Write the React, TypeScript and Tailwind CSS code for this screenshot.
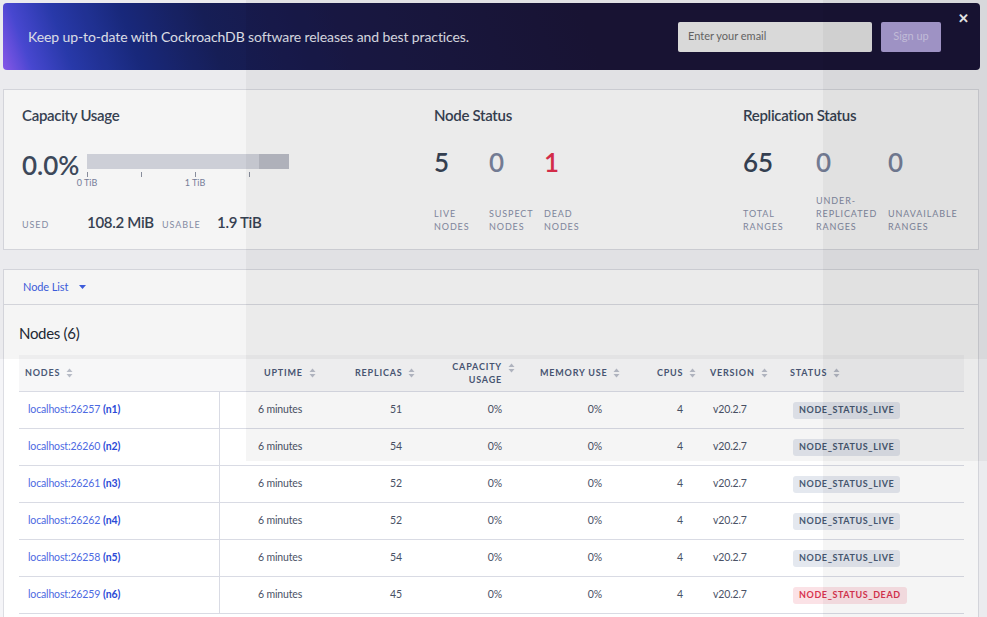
import React from 'react';

const font = { fontFamily: 'Lato, "Noto Sans", sans-serif' };

type NodeRow = {
  addr: string;
  id: string;
  replicas: number;
  dead?: boolean;
};

const rows: NodeRow[] = [
  { addr: 'localhost:26257', id: 'n1', replicas: 51 },
  { addr: 'localhost:26260', id: 'n2', replicas: 54 },
  { addr: 'localhost:26261', id: 'n3', replicas: 52 },
  { addr: 'localhost:26262', id: 'n4', replicas: 52 },
  { addr: 'localhost:26258', id: 'n5', replicas: 54 },
  { addr: 'localhost:26259', id: 'n6', replicas: 45, dead: true },
];

const SortIcon = () => (
  <svg width="7" height="10" viewBox="0 0 7 10" className="ml-[6px] shrink-0">
    <path d="M3.5 0.5 L6.5 4 L0.5 4 Z" fill="#b7bbc6" />
    <path d="M3.5 9.5 L6.5 6 L0.5 6 Z" fill="#b7bbc6" />
  </svg>
);

// statistique avec libellé en bas
const Stat = ({
  value,
  label,
  color,
  width,
}: {
  value: string;
  label: string[];
  color: string;
  width: string;
}) => (
  <div className={`flex flex-col h-full ${width}`}>
    <div className={`text-[26px] leading-[32px] font-semibold ${color}`}>{value}</div>
    <div className="mt-auto text-[9px] leading-[13px] tracking-[0.9px] text-[#8a91aa]">
      {label.map((l) => (
        <div key={l}>{l}</div>
      ))}
    </div>
  </div>
);

export default function App() {
  return (
    <div className="relative w-[987px] h-[617px] overflow-hidden bg-[#f5f5f8]" style={font}>
      {/* bandeau newsletter */}
      <div className="mx-[3px] mt-[3px] h-[67px] w-[977px] rounded-[4px] flex items-center pl-[25px] pr-[11px] bg-[linear-gradient(70deg,#8d5cf2_0%,#4a4ad8_3%,#2a3cb0_7%,#1a2a80_14%,#17205a_22%,#1b1a48_35%,#1b1539_60%,#1b1539_100%)]">
        <span className="text-[14px] tracking-[-0.1px] text-[#e4e6f0]">
          Keep up-to-date with CockroachDB software releases and best practices.
        </span>
        <div className="ml-auto w-[194px] h-[30px] rounded-[2px] bg-[#ececec] flex items-center pl-[10px] text-[11px] text-[#6b6b6b]">
          Enter your email
        </div>
        <div className="ml-[9px] w-[60px] h-[30px] rounded-[2px] bg-[#b3a6de] flex items-center justify-center text-[11px] text-[#dcd4f4]">
          Sign up
        </div>
        <div className="self-start mt-[9px] ml-[17px] text-white text-[13px] font-bold leading-none">
          ✕
        </div>
      </div>

      {/* récapitulatif du cluster */}
      <div className="mx-[3px] mt-[19px] w-[976px] h-[161px] border border-[#dcdde3] bg-white flex pl-[18px]">
        <div className="w-[412px] flex flex-col pt-[15px] pb-[16px]">
          <div className="text-[15px] leading-[20px] font-semibold tracking-[-0.3px] text-[#394455]">
            Capacity Usage
          </div>
          <div className="flex mt-[29px]">
            <div className="w-[65px] text-[26px] leading-[22px] font-semibold text-[#404b5e]">0.0%</div>
            <div className="flex flex-col">
              <div className="flex w-[202px] h-[15px]">
                <div className="w-[172px] bg-[#d6d8e0]" />
                <div className="w-[30px] bg-[#bfc1ca]" />
              </div>
              <div className="flex mt-[3px]">
                <div className="w-[54px] h-[5px] border-l border-[#8e93a3]" />
                <div className="w-[54px] h-[5px] border-l border-[#8e93a3]" />
                <div className="w-[54px] h-[5px] border-l border-[#8e93a3]" />
                <div className="w-[54px] h-[5px] border-l border-[#8e93a3]" />
              </div>
              <div className="flex text-[9px] leading-[11px] text-[#7b83a0]">
                <div className="w-[108px]">
                  <span className="inline-block -translate-x-1/2">0 TiB</span>
                </div>
                <div className="w-[108px]">
                  <span className="inline-block -translate-x-1/2">1 TiB</span>
                </div>
              </div>
            </div>
          </div>
          <div className="mt-auto flex items-baseline">
            <span className="w-[65px] text-[9px] tracking-[0.9px] text-[#8a91aa]">USED</span>
            <span className="w-[75px] text-[15px] font-semibold tracking-[-0.3px] text-[#394455]">108.2 MiB</span>
            <span className="w-[55px] text-[9px] tracking-[0.9px] text-[#8a91aa]">USABLE</span>
            <span className="text-[15px] font-semibold tracking-[-0.3px] text-[#394455]">1.9 TiB</span>
          </div>
        </div>

        <div className="w-[309px] flex flex-col pt-[15px] pb-[16px]">
          <div className="text-[15px] leading-[20px] font-semibold tracking-[-0.3px] text-[#394455]">
            Node Status
          </div>
          <div className="flex flex-1 mt-[21px]">
            <Stat value="5" label={['LIVE', 'NODES']} color="text-[#3a4558]" width="w-[55px]" />
            <Stat value="0" label={['SUSPECT', 'NODES']} color="text-[#7d87a1]" width="w-[55px]" />
            <Stat value="1" label={['DEAD', 'NODES']} color="text-[#e5304f]" width="w-[55px]" />
          </div>
        </div>

        <div className="flex-1 flex flex-col pt-[15px] pb-[16px]">
          <div className="text-[15px] leading-[20px] font-semibold tracking-[-0.3px] text-[#394455]">
            Replication Status
          </div>
          <div className="flex flex-1 mt-[21px]">
            <Stat value="65" label={['TOTAL', 'RANGES']} color="text-[#3a4558]" width="w-[73px]" />
            <Stat
              value="0"
              label={['UNDER-', 'REPLICATED', 'RANGES']}
              color="text-[#7d87a1]"
              width="w-[72px]"
            />
            <Stat value="0" label={['UNAVAILABLE', 'RANGES']} color="text-[#7d87a1]" width="w-[80px]" />
          </div>
        </div>
      </div>

      {/* liste des noeuds */}
      <div className="mx-[3px] mt-[19px] w-[976px] h-[400px] border border-[#dcdde3] bg-white">
        <div className="h-[35px] border-b border-[#dcdde3] flex items-center pl-[19px] text-[11px] tracking-[-0.1px] text-[#3f5fe3]">
          Node List
          <svg width="7" height="4" viewBox="0 0 7 4" className="ml-[11px]">
            <path d="M0 0 L7 0 L3.5 4 Z" fill="#3f5fe3" />
          </svg>
        </div>
        <div className="pl-[15px]">
          <div className="mt-[18px] text-[15px] leading-[20px] tracking-[-0.3px] text-[#242a35]">Nodes (6)</div>
          <div className="mt-[12px] w-[945px]">
            <div className="flex h-[37px] bg-[#f7f7f8] border-b border-[#d9dbe4] text-[9px] font-bold tracking-[0.8px] text-[#4a5876] whitespace-nowrap">
              <div className="w-[201px] pl-[6px] flex items-center">
                NODES
                <SortIcon />
              </div>
              <div className="w-[110px] pl-[44px] flex items-center">
                UPTIME
                <SortIcon />
              </div>
              <div className="w-[90px] pl-[25px] flex items-center">
                REPLICAS
                <SortIcon />
              </div>
              <div className="w-[100px] pr-[5px] flex items-center justify-end">
                <div className="text-right leading-[13px]">
                  CAPACITY
                  <br />
                  USAGE
                </div>
                <div className="self-start mt-[8px]">
                  <SortIcon />
                </div>
              </div>
              <div className="w-[105px] pl-[20px] flex items-center">
                MEMORY USE
                <SortIcon />
              </div>
              <div className="w-[75px] pl-[32px] flex items-center">
                CPUS
                <SortIcon />
              </div>
              <div className="w-[80px] pl-[10px] flex items-center">
                VERSION
                <SortIcon />
              </div>
              <div className="flex-1 pl-[10px] flex items-center">
                STATUS
                <SortIcon />
              </div>
            </div>
            {rows.map((r) => (
              <div
                key={r.id}
                className="flex h-[37px] border-b border-[#d9dbe4] text-[10.5px] tracking-[-0.15px] text-[#4a5266]"
              >
                <div className="w-[201px] pl-[9px] flex items-center border-r border-[#d9dbe4]">
                  <span className="text-[#4d6ae2]">{r.addr}</span>
                  <span className="ml-[3px] font-bold text-[#2b4ad6]">({r.id})</span>
                </div>
                <div className="w-[110px] pl-[38px] flex items-center">6 minutes</div>
                <div className="w-[90px] pr-[18px] flex items-center justify-end">{r.replicas}</div>
                <div className="w-[100px] pr-[18px] flex items-center justify-end">0%</div>
                <div className="w-[105px] pr-[23px] flex items-center justify-end">0%</div>
                <div className="w-[75px] pr-[17px] flex items-center justify-end">4</div>
                <div className="w-[80px] pl-[13px] flex items-center">v20.2.7</div>
                <div className="flex-1 pl-[13px] flex items-center">
                  {r.dead ? (
                    <span className="h-[17px] px-[6px] rounded-[3px] bg-[#fbe2e6] text-[#d8344f] text-[9px] font-bold tracking-[0.6px] flex items-center">
                      NODE_STATUS_DEAD
                    </span>
                  ) : (
                    <span className="h-[17px] px-[6px] rounded-[3px] bg-[#e4e8ef] text-[#475872] text-[9px] font-bold tracking-[0.6px] flex items-center">
                      NODE_STATUS_LIVE
                    </span>
                  )}
                </div>
              </div>
            ))}
          </div>
        </div>
      </div>

      {/* voiles translucides */}
      <div className="pointer-events-none absolute left-0 top-0 w-full h-[359px] bg-black/[0.04]" />
      <div className="pointer-events-none absolute left-[246px] top-0 right-0 h-[461px] bg-black/[0.04]" />
      <div className="pointer-events-none absolute left-[823px] top-0 right-0 bottom-0 bg-black/[0.04]" />
    </div>
  );
}
